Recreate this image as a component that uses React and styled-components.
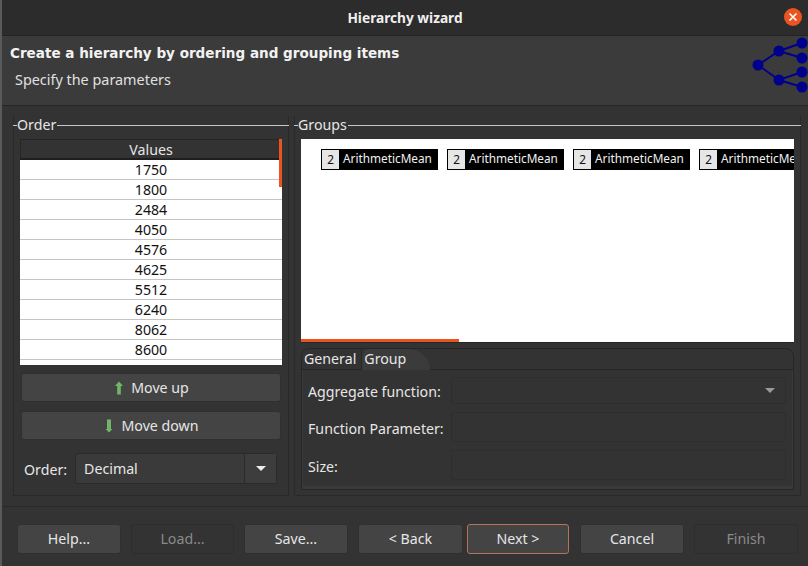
import React from "react";
import styled, { createGlobalStyle } from "styled-components";

const GlobalStyle = createGlobalStyle`
  html, body { margin: 0; padding: 0; background: #333333; }
  body { font-family: "Noto Sans", "Open Sans", sans-serif; font-size: 14.2px; color: #e6e6e6; }
  * { box-sizing: border-box; }
`;

const Window = styled.div`
  width: 808px;
  height: 566px;
  overflow: hidden;
  display: flex;
  flex-direction: column;
  background: #333333;
  border-left: 2px solid #5a5a5a;
`;

const TitleBar = styled.div`
  position: relative;
  height: 36px;
  flex: none;
  display: flex;
  align-items: center;
  justify-content: center;
  background: #2c2c2c;
  border-bottom: 1px solid #232323;
  font-weight: 700;
  font-size: 13.7px;
  color: #f0f0f0;
`;

const CloseButton = styled.div`
  position: absolute;
  right: 6px;
  top: 8px;
  width: 18px;
  height: 18px;
  border-radius: 50%;
  background: #e95420;
  display: flex;
  align-items: center;
  justify-content: center;
`;

const Banner = styled.div`
  position: relative;
  height: 70px;
  flex: none;
  padding: 8px 0 0 8px;
  background: #3b3b3b;
  border-bottom: 1px solid #262626;
  overflow: hidden;
`;

const BannerTitle = styled.div`
  font-family: "DejaVu Sans", sans-serif;
  font-weight: 700;
  font-size: 13.55px;
  line-height: 18px;
  color: #f2f2f2;
`;

const BannerSub = styled.div`
  margin: 8px 0 0 5px;
  font-size: 14.4px;
  line-height: 19px;
  color: #e0e0e0;
`;

const BannerIcon = styled.svg`
  position: absolute;
  right: 0;
  top: 0;
`;

const Body = styled.div`
  height: 400px;
  flex: none;
  display: flex;
  gap: 5px;
  padding: 10px 7px 0 11px;
`;

const Group = styled.div`
  display: flex;
  flex-direction: column;
  flex: ${(p) => (p.$grow ? 1 : "none")};
  min-width: 0;
  width: ${(p) => (p.$grow ? "auto" : "276px")};
  height: 380px;
  border: 1px solid #292929;
  border-top: none;
`;

const Legend = styled.div`
  display: flex;
  align-items: center;
  height: 18px;
  margin: 0 -1px;
  color: #e6e6e6;
  &::before {
    content: "";
    width: 4px;
    height: 1px;
    background: #c8c8c8;
  }
  &::after {
    content: "";
    flex: 1;
    height: 1px;
    background: #c8c8c8;
  }
`;

const LegendText = styled.span`
  padding: 0 1px 0 0;
  line-height: 16px;
`;

const GroupBody = styled.div`
  flex: 1;
  display: flex;
  flex-direction: column;
  padding: ${(p) => p.$pad};
  min-height: 0;
`;

const Table = styled.div`
  position: relative;
  height: 226px;
  flex: none;
  background: #ffffff;
  overflow: hidden;
`;

const TableHead = styled.div`
  height: 21px;
  background: #333333;
  border: 1px solid #262626;
  border-bottom: 2px solid #1e1e1e;
  text-align: center;
  line-height: 19px;
  color: #e6e6e6;
`;

const Row = styled.div`
  height: 20px;
  border-bottom: 1px solid #c4c4c4;
  text-align: center;
  line-height: 19px;
  color: #111111;
`;

const VThumb = styled.div`
  position: absolute;
  top: 0;
  right: 0;
  width: 3px;
  height: 48px;
  background: #e95420;
`;

const Button = styled.div`
  display: flex;
  align-items: center;
  justify-content: center;
  gap: 8px;
  height: 30px;
  border-radius: 3px;
  border: 1px solid ${(p) => (p.$focus ? "#b5735c" : p.$disabled ? "#2d2d2d" : "#303030")};
  background: ${(p) => (p.$disabled ? "#333333" : "#444444")};
  color: ${(p) => (p.$disabled ? "#8a8a8a" : "#e6e6e6")};
`;

const MoveButton = styled(Button)`
  height: 29px;
  padding-left: 2px;
  margin-top: ${(p) => p.$top}px;
  margin-left: 1px;
  margin-right: 1px;
`;

const ComboRow = styled.div`
  display: flex;
  align-items: center;
  gap: 8px;
  margin: 13px 5px 0 4px;
`;

const ComboLabel = styled.span`
  padding-top: 1px;
`;

const Combo = styled.div`
  flex: 1;
  height: 31px;
  display: flex;
  border-radius: 3px;
  background: #3a3a3a;
  border: 1px solid #2a2a2a;
`;

const ComboText = styled.div`
  flex: 1;
  padding-left: 8px;
  line-height: 29px;
  color: #e6e6e6;
`;

const ComboArrow = styled.div`
  width: 32px;
  display: flex;
  align-items: center;
  justify-content: center;
  border-left: 1px solid #2a2a2a;
  background: #3d3d3d;
  &::after {
    content: "";
    border-left: 5px solid transparent;
    border-right: 5px solid transparent;
    border-top: 5px solid ${(p) => (p.$dim ? "#9a9a9a" : "#ececec")};
  }
`;

const Canvas = styled.div`
  position: relative;
  height: 204px;
  flex: none;
  background: #ffffff;
  padding: 10px 0 0 20px;
  display: flex;
  gap: 9px;
  overflow: hidden;
  border-bottom: 1px solid #262626;
`;

const Node = styled.div`
  flex: none;
  width: 117px;
  height: 21px;
  display: flex;
  background: #000000;
  font-size: 11.8px;
  line-height: 19px;
  color: #f0f0f0;
  white-space: nowrap;
`;

const NodeCount = styled.span`
  width: 17px;
  height: 19px;
  margin: 1px 4px 1px 1px;
  flex: none;
  text-align: center;
  background: #e6e6e6;
  color: #111111;
`;

const HThumb = styled.div`
  position: absolute;
  left: 0;
  bottom: 0;
  width: 158px;
  height: 3px;
  background: #e95420;
`;

const TabBox = styled.div`
  margin-top: 5px;
  height: 142px;
  display: flex;
  flex-direction: column;
  border: 1px solid #262626;
  border-radius: 8px 8px 0 0;
`;

const Tabs = styled.div`
  display: flex;
  height: 21px;
  flex: none;
  border-bottom: 1px solid #262626;
`;

const Tab = styled.div`
  padding: 0 ${(p) => (p.$active ? "24px" : "5px")} 0 2px;
  line-height: 20px;
  color: #e6e6e6;
  background: ${(p) => (p.$active ? "#3b3b3b" : "transparent")};
  border-right: ${(p) => (p.$active ? "none" : "1px solid #262626")};
  border-radius: ${(p) => (p.$active ? "8px 22px 0 0" : "8px 0 0 0")};
  margin-bottom: ${(p) => (p.$active ? "-1px" : "0")};
`;

const TabPanel = styled.div`
  flex: 1;
  display: grid;
  grid-template-columns: 143px 1fr;
  grid-template-rows: 27px 30px 30px;
  row-gap: 8px;
  align-items: center;
  padding: 7px 6px 0 5px;
  border: 3px solid #3a3a3a;
  border-top: none;
  border-left-width: 1px;
  border-right-width: 1px;
`;

const FieldLabel = styled.div`
  padding-top: 2px;
  color: #e6e6e6;
  white-space: nowrap;
`;

const Field = styled.div`
  height: 100%;
  display: flex;
  align-items: center;
  justify-content: flex-end;
  border: 1px solid #2e2e2e;
  border-radius: 3px;
  background: #333333;
`;

const FieldArrow = styled(ComboArrow)`
  border: none;
  background: transparent;
  width: 30px;
`;

const Footer = styled.div`
  height: 60px;
  flex: none;
  display: flex;
  gap: 10px;
  align-items: flex-start;
  padding: 17px 10px 0 15px;
  border-top: 1px solid #292929;
`;

const FooterButton = styled(Button)`
  width: ${(p) => p.$w}px;
  padding-bottom: 2px;
  margin-right: ${(p) => p.$after || 0}px;
`;

const values = [1750, 1800, 2484, 4050, 4576, 4625, 5512, 6240, 8062, 8600, ""];

const UpArrow = () => (
  <svg width="8" height="14" viewBox="0 0 8 14">
    <path d="M4 0.5 L8 5 H5.8 V13.5 H2.2 V5 H0 Z" fill="#6fb765" />
  </svg>
);

const DownArrow = () => (
  <svg width="8" height="14" viewBox="0 0 8 14">
    <path d="M2 0.5 H6 V10 H7.5 L4 13.5 L0.5 10 H2 Z" fill="#6fb765" />
  </svg>
);

const App = () => (
  <Window>
    <GlobalStyle />
    <TitleBar>
      Hierarchy wizard
      <CloseButton>
        <svg width="10" height="10" viewBox="0 0 10 10">
          <path d="M1.5 1.5 L8.5 8.5 M8.5 1.5 L1.5 8.5" stroke="#ffffff" strokeWidth="1.6" />
        </svg>
      </CloseButton>
    </TitleBar>
    <Banner>
      <BannerTitle>Create a hierarchy by ordering and grouping items</BannerTitle>
      <BannerSub>Specify the parameters</BannerSub>
      <BannerIcon width="60" height="70" viewBox="0 0 60 70">
        <g stroke="#00008b" strokeWidth="2" fill="none">
          <path d="M10 29 L31 15 L54 7 M31 15 L54 22 M10 29 L31 44 L54 36 M31 44 L54 51" />
        </g>
        <g fill="#00008b">
          <circle cx="10" cy="29" r="5.5" />
          <circle cx="31" cy="15" r="5.5" />
          <circle cx="31" cy="44" r="5.5" />
          <circle cx="54" cy="7" r="5.5" />
          <circle cx="54" cy="22" r="5.5" />
          <circle cx="54" cy="36" r="5.5" />
          <circle cx="54" cy="51" r="5.5" />
        </g>
      </BannerIcon>
    </Banner>
    <Body>
      <Group>
        <Legend>
          <LegendText>Order</LegendText>
        </Legend>
        <GroupBody $pad="5px 6px 0 6px">
          <Table>
            <TableHead>Values</TableHead>
            {values.map((v, i) => (
              <Row key={i}>{v}</Row>
            ))}
            <VThumb />
          </Table>
          <MoveButton $top={8}>
            <UpArrow />
            Move up
          </MoveButton>
          <MoveButton $top={9}>
            <DownArrow />
            Move down
          </MoveButton>
          <ComboRow>
            <ComboLabel>Order:</ComboLabel>
            <Combo>
              <ComboText>Decimal</ComboText>
              <ComboArrow />
            </Combo>
          </ComboRow>
        </GroupBody>
      </Group>
      <Group $grow>
        <Legend>
          <LegendText>Groups</LegendText>
        </Legend>
        <GroupBody $pad="5px 6px 0 6px">
          <Canvas>
            {[0, 1, 2, 3].map((i) => (
              <Node key={i}>
                <NodeCount>2</NodeCount>
                ArithmeticMean
              </Node>
            ))}
            <HThumb />
          </Canvas>
          <TabBox>
            <Tabs>
              <Tab>General</Tab>
              <Tab $active>Group</Tab>
            </Tabs>
            <TabPanel>
              <FieldLabel>Aggregate function:</FieldLabel>
              <Field>
                <FieldArrow $dim />
              </Field>
              <FieldLabel>Function Parameter:</FieldLabel>
              <Field />
              <FieldLabel>Size:</FieldLabel>
              <Field />
            </TabPanel>
          </TabBox>
        </GroupBody>
      </Group>
    </Body>
    <Footer>
      <FooterButton $w={104}>Help...</FooterButton>
      <FooterButton $w={103} $disabled>Load...</FooterButton>
      <FooterButton $w={104}>Save...</FooterButton>
      <FooterButton $w={105} $after={-6}>&lt; Back</FooterButton>
      <FooterButton $w={102} $after={1} $focus>Next &gt;</FooterButton>
      <FooterButton $w={104}>Cancel</FooterButton>
      <FooterButton $w={104} $disabled>Finish</FooterButton>
    </Footer>
  </Window>
);

export default App;
